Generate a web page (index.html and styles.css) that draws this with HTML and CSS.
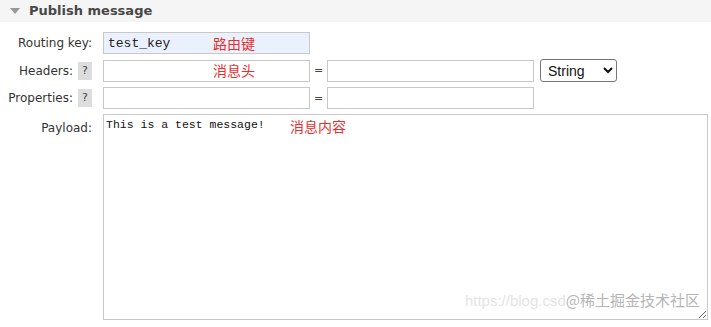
FILE: index.html
```html
<!DOCTYPE html>
<html lang="zh">
<head>
    <meta charset="UTF-8">
    <meta name="viewport" content="width=device-width, initial-scale=1.0">
    <title>Publish message</title>
    <link rel="stylesheet" href="styles.css">
</head>
<body>
    <div class="section">
        <h2 class="section-title"><span class="arrow"></span>Publish message</h2>
        <form class="publish">
            <div class="row">
                <label class="label">Routing key:</label>
                <div class="field">
                    <input class="text key" type="text" value="test_key">
                    <span class="note note-key">路由键</span>
                </div>
            </div>
            <div class="row">
                <label class="label">Headers: <span class="help">?</span></label>
                <div class="field">
                    <input class="text" type="text">
                    <span class="note note-head">消息头</span>
                    <span class="eq">=</span>
                    <input class="text" type="text">
                    <select class="type">
                        <option>String</option>
                        <option>Number</option>
                        <option>Boolean</option>
                    </select>
                </div>
            </div>
            <div class="row">
                <label class="label">Properties: <span class="help">?</span></label>
                <div class="field">
                    <input class="text" type="text">
                    <span class="eq">=</span>
                    <input class="text" type="text">
                </div>
            </div>
            <div class="row row-payload">
                <label class="label">Payload:</label>
                <div class="field payload">
                    <textarea class="body">This is a test message!</textarea>
                    <span class="note note-body">消息内容</span>
                    <span class="mark"><span class="mark-url">https://blog.csd</span>@稀土掘金技术社区</span>
                </div>
            </div>
        </form>
    </div>
</body>
</html>
```

FILE: styles.css
```css
body { margin: 0; font-family: "DejaVu Sans", Verdana, sans-serif; font-size: 12px; color: #333; background: #fff; }
.section-title { margin: 0; height: 22px; line-height: 22px; background: #f5f5f5; font-size: 13px; font-weight: bold; color: #484848; display: flex; align-items: center; }
.arrow { width: 0; height: 0; border-left: 5px solid transparent; border-right: 5px solid transparent; border-top: 6px solid #999; margin: 0 9px 0 10px; }
.publish { padding-top: 10px; }
.row { display: flex; align-items: center; margin-bottom: 5px; }
.row-payload { align-items: flex-start; margin-top: 1px; }
.label { width: 92px; text-align: right; margin-right: 11px; display: flex; justify-content: flex-end; align-items: center; gap: 5px; white-space: nowrap; font-size: 12px; }
.row-payload .label { padding-top: 7px; }
.help { display: inline-block; width: 14px; height: 18px; line-height: 18px; text-align: center; background: #ddd; font-size: 11px; color: #444; }
.field { position: relative; display: flex; align-items: center; }
.text { box-sizing: border-box; width: 207px; height: 22px; border: 1px solid #c8c8c8; padding: 1px 4px; margin: 0; font-family: "Liberation Mono", monospace; font-size: 13px; color: #222; }
.key { background: #eaf0fc; }
.eq { width: 17px; text-align: center; font-size: 11px; color: #444; }
.type { margin-left: 6px; width: 77px; height: 23px; border: 1px solid #767676; border-radius: 3px; background: #fff; font-family: "Liberation Sans", Arial, sans-serif; font-size: 14px; padding: 0 3px; color: #111; }
.note { position: absolute; top: 2px; font-family: "Noto Sans CJK SC", sans-serif; font-size: 14px; color: #e3312f; line-height: 18px; }
.note-key { left: 110px; }
.note-head { left: 110px; }
.note-body { left: 187px; top: 3px; }
.body { box-sizing: border-box; width: 605px; height: 206px; border: 1px solid #c8c8c8; padding: 3px 2px; margin: 0; font-family: "Liberation Mono", monospace; font-size: 11.5px; color: #111; resize: both; }
.mark { position: absolute; right: 8px; bottom: 10px; font-family: "Noto Sans CJK SC", sans-serif; font-size: 15px; color: #b5b5b5; }
.mark-url { color: #e4e4e4; font-family: "Liberation Sans", Arial, sans-serif; }
```
